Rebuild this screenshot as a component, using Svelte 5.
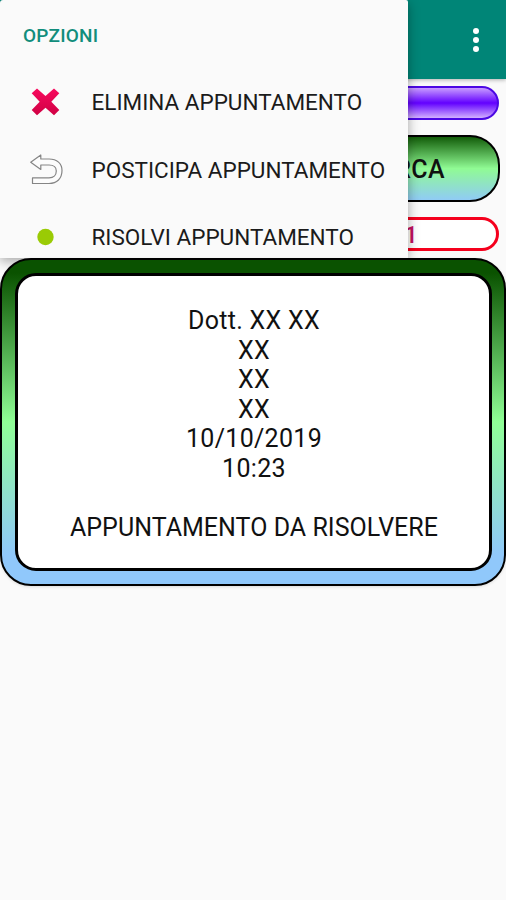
<script>
  const details = ["Dott. XX XX", "XX", "XX", "XX", "10/10/2019", "10:23"];
</script>

<div class="screen">
  <header class="toolbar">
    <button class="more" aria-label="Altro">
      <span></span>
      <span></span>
      <span></span>
    </button>
  </header>

  <main>
    <div class="date-bar"></div>
    <button class="search">CERCA</button>
    <div class="counter">1</div>

    <section class="card">
      <div class="card-body">
        {#each details as line}
          <div>{line}</div>
        {/each}
        <div class="status">APPUNTAMENTO DA RISOLVERE</div>
      </div>
    </section>
  </main>

  <nav class="menu">
    <h2>OPZIONI</h2>
    <ul>
      <li>
        <svg width="46" height="40" viewBox="0 0 46 40">
          <defs>
            <linearGradient id="cross" x1="0" y1="0" x2="0" y2="1">
              <stop offset="0" stop-color="#f80a5e" />
              <stop offset="1" stop-color="#cf0043" />
            </linearGradient>
          </defs>
          <path
            d="M14 6.5 L22.5 14 L31 6.5 L36.3 11.3 L28.3 19.8 L36.3 28 L31 33.3 L22.5 25.8 L14 33.3 L8.7 28 L16.7 19.8 L8.7 11.3 Z"
            fill="url(#cross)"
          />
        </svg>
        <span>ELIMINA APPUNTAMENTO</span>
      </li>
      <li>
        <svg width="46" height="40" viewBox="0 0 46 40">
          <path
            d="M17.8 6 V10 H26 C34 10 39 14.5 39 21.5 C39 29.5 34 34.5 26 34.5 H9.5 V28.8 H26 C31 28.8 33.3 25.5 33.3 22 C33.3 18.5 31 16 26 16 H17.8 V20.5 L7.7 13.3 Z"
            fill="#fcfcfc"
            stroke="#858585"
            stroke-width="1.2"
            stroke-linejoin="round"
          />
        </svg>
        <span>POSTICIPA APPUNTAMENTO</span>
      </li>
      <li>
        <svg width="46" height="40" viewBox="0 0 46 40">
          <circle cx="22.5" cy="20" r="8.2" fill="#9acb05" />
        </svg>
        <span>RISOLVI APPUNTAMENTO</span>
      </li>
    </ul>
  </nav>
</div>

<style>
  :global(body) {
    margin: 0;
    background: #fafafa;
  }

  .screen {
    position: relative;
    width: 506px;
    height: 900px;
    overflow: hidden;
    background: #fafafa;
    color: #111;
    font-family: Roboto, sans-serif;
  }

  .toolbar {
    display: flex;
    align-items: center;
    justify-content: flex-end;
    height: 79px;
    padding: 1px 26px 0 0;
    box-sizing: border-box;
    background: #008577;
    box-shadow: 0 1px 4px rgba(0, 0, 0, 0.3);
  }

  .more {
    display: flex;
    flex-direction: column;
    gap: 2.5px;
    padding: 0 1px;
    border: none;
    background: none;
  }

  .more span {
    width: 6.2px;
    height: 6.2px;
    border-radius: 50%;
    background: #fff;
  }

  main {
    display: flex;
    flex-direction: column;
    padding-top: 7px;
  }

  .date-bar,
  .search,
  .counter {
    box-sizing: border-box;
    margin: 0 7px 0 7px;
  }

  .date-bar {
    height: 34px;
    border: 2px solid #4c08e4;
    border-radius: 17px;
    background: linear-gradient(#c89cff, #6200ff 50%, #d2b0ff);
  }

  .search {
    height: 67px;
    margin: 15px 6px 0 7px;
    padding: 2px 0 0;
    border: 2px solid #000;
    border-radius: 30px;
    background: linear-gradient(#0a5200, #90fb94 50%, #90c8fb) border-box;
    color: #111;
    font-family: inherit;
    font-size: 25px;
    font-weight: 500;
    letter-spacing: 0.3px;
    text-indent: 302px;
  }

  .counter {
    height: 34px;
    margin-top: 15px;
    border: 3.5px solid #f5001d;
    border-radius: 17px;
    background: #fff;
    color: #c51162;
    font-size: 24px;
    font-weight: 500;
    line-height: 31px;
    text-align: center;
    text-indent: 316px;
  }

  /* sits over the menu's lower edge */
  .card {
    position: relative;
    z-index: 2;
    box-sizing: border-box;
    height: 328px;
    margin-top: 7px;
    padding: 13px 12px 13px 13px;
    border: 2px solid #000;
    border-radius: 31px;
    background: linear-gradient(#0a5200, #0a5200 4%, #90ff96 50%, #90c8fb 91%, #90c8fb);
    box-shadow: 0 1px 3px rgba(0, 0, 0, 0.12);
  }

  .card-body {
    box-sizing: border-box;
    height: 100%;
    padding: 30px 0 0 1px;
    border: 3px solid #000;
    border-radius: 21px;
    background: #fff;
    font-size: 25px;
    line-height: 29.5px;
    letter-spacing: 0.3px;
    text-align: center;
  }

  .status {
    margin-top: 29.5px;
    letter-spacing: 0.03px;
  }

  .menu {
    position: absolute;
    top: 0;
    left: 0;
    z-index: 1;
    width: 408px;
    height: 258px;
    border-radius: 3px 2px 0 0;
    background: #fafafa;
    box-shadow: 0 3px 12px rgba(0, 0, 0, 0.35);
  }

  h2 {
    margin: 0;
    padding: 24px 0 0 23px;
    color: #118d7c;
    font-size: 19px;
    font-weight: 500;
    line-height: 24px;
    letter-spacing: 0.25px;
  }

  ul {
    margin: 0;
    padding: 20px 0 0 23px;
    list-style: none;
  }

  li {
    display: flex;
    align-items: center;
    height: 67.5px;
    color: #1b1b1b;
    font-size: 22.5px;
  }

  li span {
    margin: 1px 0 0 22.5px;
    white-space: nowrap;
  }
</style>
